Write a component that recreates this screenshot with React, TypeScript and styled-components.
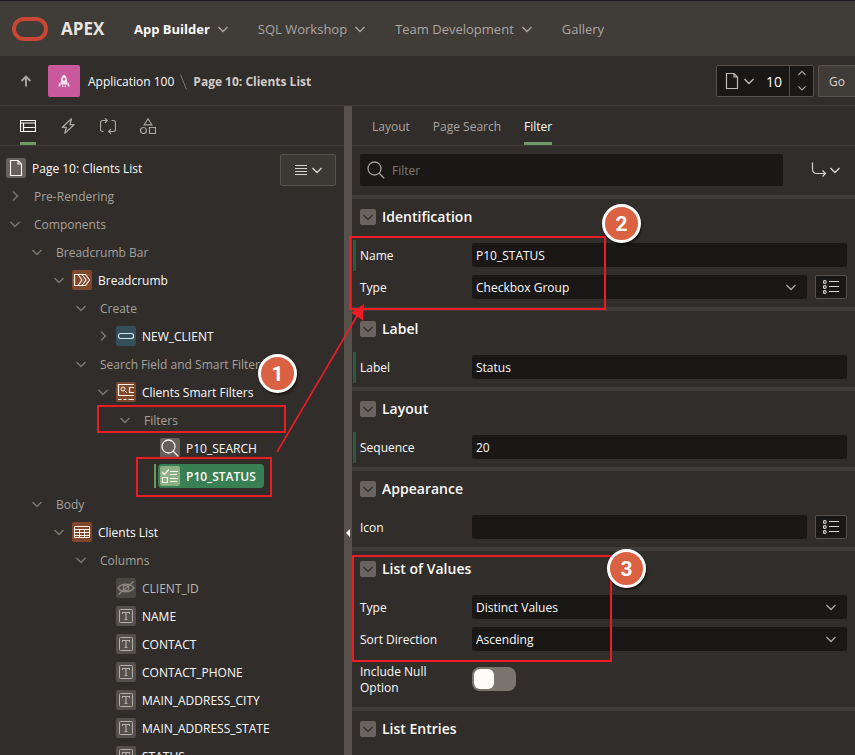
import React, { useState } from "react";
import styled, { createGlobalStyle, css } from "styled-components";

const c = {
  header: "#403c38",
  body: "#312d2a",
  field: "#1a1816",
  line: "#403c39",
  splitter: "#56514b",
  border: "#57524d",
  text: "#fcfbfa",
  muted: "#aaa6a2",
  dim: "#7d7874",
  green: "#6d9a65",
  red: "#ec1c24",
  badge: "#da6141",
};

const GlobalStyle = createGlobalStyle`
  *, *::before, *::after { box-sizing: border-box; }
  html, body { margin: 0; background: ${c.body}; }
  body, button, input, select {
    font-family: "Open Sans", "Noto Sans", sans-serif;
    font-size: 12px;
    line-height: 16px;
    color: ${c.text};
  }
  button, input, select { margin: 0; padding: 0; border: 0; background: none; outline: none; }
  svg { display: block; flex: none; }
  a { color: inherit; text-decoration: none; }
`;

/* ---------- icons ---------- */

const Chevron = ({ dir = "down", size = 10 }: { dir?: "down" | "up" | "right"; size?: number }) => {
  const d = { down: "M.5 3L5 7.500 9.500 3", up: "M.5 7.500L5 3l4.500 4.500", right: "M3 .5L7.500 5 3 9.500" }[dir];
  return (
    <svg width={size} height={size} viewBox="0 0 10 10" fill="none" stroke="currentColor" strokeWidth="1.4" aria-hidden>
      <path d={d} />
    </svg>
  );
};

const Icon = ({ size = 16, children }: { size?: number; children: React.ReactNode }) => (
  <svg width={size} height={size} viewBox={`0 0 ${size} ${size}`} fill="none" stroke="currentColor" aria-hidden>
    {children}
  </svg>
);

const OracleMark = () => (
  <svg width="36" height="24" viewBox="0 0 36 24" fill="none" aria-hidden>
    <rect x="2" y="2" width="32" height="20" rx="10" stroke="#c74634" strokeWidth="4" />
  </svg>
);

const RocketIcon = () => (
  <Icon>
    <g fill="#f6e3ee" stroke="none">
      <path d="M8 1.5C5.8 3 5 5.200 5 7.500v4h6v-4C11 5.200 10.200 3 8 1.500zM8 5a1.300 1.300 0 1 1 0 2.600A1.300 1.300 0 0 1 8 5z" fillRule="evenodd" />
      <path d="M4.300 8.500L2.700 11v3.200l1.900-1.700zM11.700 8.500l1.600 2.500v3.200l-1.900-1.700zM6 12.200h1.200v2H6zM8.800 12.200H10v2H8.800z" />
    </g>
  </Icon>
);

const UpArrowIcon = () => (
  <Icon size={12}>
    <path d="M6 11.500V2M1.500 6L6 1.500 10.500 6" strokeWidth="1.900" />
  </Icon>
);

const PageIcon = ({ size = 20 }: { size?: number }) => (
  <svg width={size} height={size} viewBox="0 0 20 20" fill="none" stroke="currentColor" aria-hidden>
    <path d="M4.500 2.500h7.500l3.500 3.500v11.500h-11zM12 2.500V6h3.500" strokeWidth="1.200" />
  </svg>
);

const LayoutTabIcon = () => (
  <Icon>
    <path d="M.5 2.500h15v11H.5zM.5 5h15M3.500 5v8.500M3.500 9.500h12" strokeWidth="1.200" />
  </Icon>
);
const BoltIcon = () => (
  <Icon>
    <path d="M11.500.8L2.300 9.300h4L4.800 15.300l9.200-8.600h-4z" strokeWidth="1.300" strokeLinejoin="round" />
  </Icon>
);
const ProcessIcon = () => (
  <Icon>
    <path d="M3.500 13.500h-1a2 2 0 0 1-2-2v-7a2 2 0 0 1 2-2H7M5 .2l2.300 2.300L5 4.800M11.500 2.500h2a2 2 0 0 1 2 2v7a2 2 0 0 1-2 2H9M11 11.200l-2.300 2.300 2.300 2.300" strokeWidth="1.200" />
  </Icon>
);
const ShapesIcon = () => (
  <Icon>
    <g strokeWidth="1.200">
      <path d="M8 .8l3.800 6H4.200zM9.500 9.500h6v6h-6z" />
      <circle cx="3.500" cy="12.500" r="3" />
    </g>
  </Icon>
);
const SearchIcon = ({ size = 18 }: { size?: number }) => (
  <svg width={size} height={size} viewBox="0 0 18 18" fill="none" stroke="currentColor" strokeWidth="1.300" aria-hidden>
    <circle cx="7.500" cy="7.500" r="6.500" />
    <path d="M12.200 12.200l5 5" />
  </svg>
);
const MenuIcon = () => (
  <Icon size={12}>
    <path d="M0 1.500h12M0 4.500h12M0 7.500h12M0 10.500h12" />
  </Icon>
);
const GoToIcon = () => (
  <Icon>
    <path d="M1.500.5V7c0 3 1.500 4.500 4.500 4.500h8.500M11.500 8.500l3 3-3 3" strokeWidth="1.200" />
  </Icon>
);
const ListIcon = () => (
  <Icon>
    <g strokeWidth="1.100">
      <circle cx="1.800" cy="3" r="1.400" />
      <circle cx="1.800" cy="8" r="1.400" />
      <circle cx="1.800" cy="13" r="1.400" />
    </g>
    <path d="M6 2.500h10M6 7.500h10M6 12.500h10" />
  </Icon>
);
const BreadcrumbIcon = () => (
  <Icon size={20}>
    <path d="M2.500 4.500h3.500l4 5.500-4 5.500H2.500zM6.500 4.500H10l4 5.500-4 5.500H6.500M10.500 4.500h3l4 5.500-4 5.500h-3" strokeWidth="1.200" />
  </Icon>
);
const ButtonIcon = () => (
  <Icon size={20}>
    <rect x="2.500" y="7.500" width="15" height="5" rx="2" strokeWidth="1.200" />
  </Icon>
);
const SmartFilterIcon = () => (
  <Icon size={20}>
    <path d="M18 2.500H2.500v11H18M2 17.500h3.500M7.500 17.500h3M12.500 17.500H18M18 5.500h-4.500v5H18" strokeWidth="1.200" />
    <circle cx="7" cy="7" r="2" />
    <path d="M8.500 8.500l2.200 2.200" />
  </Icon>
);
const CheckListIcon = () => (
  <Icon size={20}>
    <path d="M2 6l2.200 2.500L9 3.500M10 5.500h8M10 8.500h7M10 12.500h8M10 15.500h7M2.500 11.500h5v5h-5z" strokeWidth="1.200" />
  </Icon>
);
const GridIcon = () => (
  <Icon size={20}>
    <path d="M2.500 4.500h15v11h-15zM2.500 7.500h15M2.500 10.500h15M2.500 13.500h15M7.500 7v8.500M12.500 7v8.500" />
  </Icon>
);
const HiddenIcon = () => (
  <Icon size={20}>
    <path d="M2 10c3.500-5 12.500-5 16 0-3.500 5-12.500 5-16 0zM17.500 3.500l-15 13" strokeWidth="1.400" />
    <circle cx="10" cy="10" r="2.800" strokeWidth="1.300" />
  </Icon>
);
const TextIcon = () => (
  <Icon size={20}>
    <rect x="3.500" y="3.500" width="13" height="13" rx="1" />
    <path d="M6.500 8V6.500h7V8M10 6.500v7M8.500 13.500h3" strokeWidth="1.200" />
  </Icon>
);

/* ---------- shell ---------- */

const Shell = styled.div`
  position: relative;
  display: flex;
  flex-direction: column;
  height: 100vh;
  overflow: hidden;
  background: ${c.body};
  border-top: 1px solid #1d1c24;
`;

const Header = styled.header`
  flex: none;
  display: flex;
  align-items: center;
  height: 55px;
  padding: 0 12px;
  background: ${c.header};
`;

const Brand = styled.a`
  display: flex;
  align-items: center;
  gap: 13px;
  width: 122px;
  font-size: 17px;
  line-height: 24px;
  font-weight: 700;
  color: #e6e4e1;
`;

const Nav = styled.nav`
  display: flex;
  gap: 30px;
`;

const NavItem = styled.button<{ $active?: boolean }>`
  display: flex;
  align-items: center;
  gap: 8px;
  font-size: 13px;
  line-height: 20px;
  white-space: nowrap;
  color: ${(p) => (p.$active ? c.text : c.muted)};
  font-weight: ${(p) => (p.$active ? 700 : 400)};
  svg { color: ${c.muted}; }
`;

const SubHeader = styled.div`
  flex: none;
  display: flex;
  align-items: center;
  justify-content: space-between;
  height: 50px;
  padding-left: 20px;
  border-bottom: 1px solid ${c.line};
`;

const Crumbs = styled.div`
  display: flex;
  align-items: center;
  gap: 8px;
`;

const Trail = styled.div`
  display: flex;
  align-items: center;
  gap: 6px;
  padding-top: 2px;
  line-height: 20px;
  white-space: nowrap;
`;

const UpButton = styled.button`
  display: flex;
  width: 20px;
  color: ${c.muted};
`;

const AppTile = styled.span`
  display: grid;
  place-items: center;
  width: 32px;
  height: 32px;
  border-radius: 2px;
  background: #c9599c;
`;

const CurrentPage = styled.strong`
  color: #cfccc9;
  font-weight: 700;
`;

const PageTools = styled.div`
  display: flex;
  gap: 4px;
`;

const PagePicker = styled.div`
  display: flex;
  height: 32px;
  border: 1px solid ${c.border};
  border-radius: 2px;
  background: ${c.field};
`;

const PickerButton = styled.button`
  display: flex;
  align-items: center;
  gap: 2px;
  padding: 0 5px;
  color: #bfbbb7;
`;

const PageNumber = styled.input`
  width: 30px;
  padding: 2px 0 0 7px;
  font-size: 14px;
`;

const Spinner = styled.div`
  display: flex;
  flex-direction: column;
  width: 24px;
  border-left: 1px solid ${c.border};
  color: ${c.muted};
  button { flex: 1; display: grid; place-items: center; color: inherit; }
`;

const GoButton = styled.button`
  padding: 2px 10px 0;
  border: 1px solid ${c.border};
  border-right: 0;
  border-radius: 2px 0 0 2px;
  background: ${c.header};
  color: #d6d3d0;
`;

const Workspace = styled.main`
  flex: 1;
  min-height: 0;
  display: grid;
  grid-template-columns: minmax(0, 344fr) 8px minmax(0, 503fr);
`;

const Pane = styled.section`
  min-width: 0;
  min-height: 0;
  overflow: hidden;
`;

const Splitter = styled.div`
  display: flex;
  align-items: center;
  justify-content: center;
  padding-top: 205px;
  background: ${c.splitter};
`;

const TabBar = styled.div<{ $gap: number }>`
  display: flex;
  gap: ${(p) => p.$gap}px;
  height: 40px;
  padding: 0 20px;
  border-bottom: 1px solid ${c.line};
`;

const Tab = styled.button<{ $active?: boolean }>`
  display: flex;
  align-items: center;
  padding-top: 3px;
  border-bottom: 3px solid ${(p) => (p.$active ? c.green : "transparent")};
  white-space: nowrap;
  color: ${(p) => (p.$active ? c.text : c.muted)};
`;

const TextTab = styled(Tab)`
  padding-top: 5px;
`;

/* ---------- tree ---------- */

const TreeArea = styled.div`
  display: flex;
  align-items: flex-start;
  padding: 8px 8px 0 0;
`;

const Tree = styled.ul`
  flex: 1;
  min-width: 0;
  margin: 0;
  padding: 0;
  list-style: none;
`;

const TreeRow = styled.li<{ $level: number }>`
  display: flex;
  align-items: center;
  height: 28px;
  padding-left: ${(p) => 6 + p.$level * 22}px;
  white-space: nowrap;
`;

const Toggle = styled.button`
  flex: none;
  display: flex;
  justify-content: center;
  width: 18px;
  margin-right: 4px;
  color: ${c.dim};
`;

const Node = styled.span<{ $tone: "main" | "muted" | "soft"; $selected?: boolean }>`
  display: flex;
  align-items: center;
  gap: 6px;
  color: ${(p) => ({ main: c.text, muted: "#a5a19d", soft: "#b9b6b3" }[p.$tone])};
  ${(p) =>
    p.$selected &&
    css`
      position: relative;
      margin-left: -2px;
      padding: 2px 8px 2px 2px;
      border-radius: 4px;
      background: #397f54;
      font-weight: 600;
      &::before {
        content: "";
        position: absolute;
        left: -4px;
        top: 0;
        bottom: 0;
        width: 2px;
        background: ${c.green};
      }
    `}
`;

const NodeText = styled.span`
  padding-top: 2px;
`;

const NodeIcon = styled.span<{ $bg: string; $fg?: string }>`
  display: grid;
  place-items: center;
  width: 20px;
  height: 20px;
  border-radius: 2px;
  background: ${(p) => p.$bg};
  color: ${(p) => p.$fg ?? "#fbf3ec"};
`;

const NoIcon = styled.span`
  width: 0;
`;

const MenuButton = styled.button`
  flex: none;
  display: flex;
  align-items: center;
  justify-content: center;
  gap: 5px;
  width: 56px;
  height: 32px;
  border: 1px solid ${c.border};
  border-radius: 2px;
  background: #3c3834;
  color: #d6d3d0;
`;

type TreeItem = {
  label: string;
  level: number;
  open?: boolean;
  tone?: "main" | "muted" | "soft";
  icon?: React.ReactNode;
  bg?: string;
  fg?: string;
  selected?: boolean;
  root?: boolean;
};

const orange = "#81472a";
const grey = "#65605b";
const columnBg = "#55504b";
const column = (label: string): TreeItem => ({
  label, level: 4, tone: "main", icon: <TextIcon />, bg: columnBg, fg: "#b3afab",
});

const treeItems: TreeItem[] = [
  { label: "Page 10: Clients List", level: 0, tone: "main", icon: <PageIcon />, bg: grey, root: true },
  { label: "Pre-Rendering", level: 0, open: false },
  { label: "Components", level: 0, open: true },
  { label: "Breadcrumb Bar", level: 1, open: true },
  { label: "Breadcrumb", level: 2, open: true, tone: "main", icon: <BreadcrumbIcon />, bg: orange },
  { label: "Create", level: 3, open: true },
  { label: "NEW_CLIENT", level: 4, open: false, tone: "main", icon: <ButtonIcon />, bg: "#35505b", fg: "#d3e6ee" },
  { label: "Search Field and Smart Filters", level: 3, open: true },
  { label: "Clients Smart Filters", level: 4, open: true, tone: "main", icon: <SmartFilterIcon />, bg: orange },
  { label: "Filters", level: 5, open: true },
  { label: "P10_SEARCH", level: 6, tone: "main", icon: <SearchIcon />, bg: grey },
  { label: "P10_STATUS", level: 6, tone: "main", icon: <CheckListIcon />, bg: "#8bb083", selected: true },
  { label: "Body", level: 1, open: true },
  { label: "Clients List", level: 2, open: true, tone: "main", icon: <GridIcon />, bg: orange },
  { label: "Columns", level: 3, open: true },
  { label: "CLIENT_ID", level: 4, tone: "soft", icon: <HiddenIcon />, bg: "#4a4642", fg: "#8a8580" },
  column("NAME"),
  column("CONTACT"),
  column("CONTACT_PHONE"),
  column("MAIN_ADDRESS_CITY"),
  column("MAIN_ADDRESS_STATE"),
  column("STATUS"),
];

/* ---------- property editor ---------- */

const FilterBar = styled.div`
  display: flex;
  align-items: center;
  justify-content: space-between;
  gap: 16px;
  padding: 8px 15px 9px 8px;
`;

const FilterBox = styled.label`
  flex: 1;
  max-width: 423px;
  display: flex;
  align-items: center;
  gap: 7px;
  height: 32px;
  padding: 0 7px;
  border-radius: 2px;
  background: ${c.field};
  color: #a39f9b;
  input { flex: 1; min-width: 0; height: 100%; }
  input::placeholder { color: #7d7874; opacity: 1; }
`;

const GoToButton = styled.button`
  display: flex;
  align-items: center;
  gap: 3px;
  color: #d6d3d0;
`;

const Group = styled.section`
  border-top: 4px solid ${c.line};
`;

const GroupTitle = styled.h3`
  display: flex;
  align-items: center;
  gap: 6px;
  margin: 0;
  padding: 8px;
  height: 36px;
  font-size: 14px;
  line-height: 20px;
  font-weight: 600;
`;

const Collapse = styled.button`
  display: grid;
  place-items: center;
  width: 16px;
  height: 16px;
  border-radius: 2px;
  background: #69645f;
  color: #35312e;
`;

const GroupBody = styled.div`
  padding: 4px 0;
`;

const FieldRow = styled.div<{ $changed?: boolean }>`
  display: grid;
  grid-template-columns: 104px minmax(0, 1fr);
  column-gap: 8px;
  align-items: center;
  min-height: 32px;
  padding: 4px 8px;
  background: ${(p) => (p.$changed ? "linear-gradient(#2f5843, #2f5843) 1px 100% / 3px 31px no-repeat" : "none")};
`;

const SwitchRow = styled(FieldRow)`
  padding: 7px 8px;
`;

const FieldLabel = styled.label`
  padding: 2px 16px 0 0;
`;

const Controls = styled.div`
  display: flex;
  gap: 8px;
`;

const TextField = styled.input`
  flex: 1;
  min-width: 0;
  height: 24px;
  padding: 0 4px;
  border-radius: 2px;
  background: ${c.field};
`;

const SelectWrap = styled.div`
  flex: 1;
  min-width: 0;
  display: grid;
  align-items: center;
  border-radius: 2px;
  background: ${c.field};
  color: ${c.muted};
  > * { grid-area: 1 / 1; }
  svg { justify-self: end; margin-right: 11px; pointer-events: none; }
`;

const SelectField = styled.select`
  appearance: none;
  width: 100%;
  height: 24px;
  padding: 2px 28px 0 4px;
  option { background: ${c.field}; }
`;

const SquareButton = styled.button`
  flex: none;
  display: grid;
  place-items: center;
  width: 32px;
  height: 24px;
  border: 1px solid ${c.border};
  border-radius: 2px;
  background: ${c.field};
  color: #d6d3d0;
`;

const Switch = styled.input`
  appearance: none;
  width: 44px;
  height: 24px;
  padding: 2px;
  border-radius: 8px;
  background: #7a746e;
  &::before {
    content: "";
    display: block;
    width: 20px;
    height: 20px;
    border-radius: 6px;
    background: #fcfbfa;
  }
  &:checked::before { margin-left: 20px; }
`;

type Field = {
  label: string;
  value?: string;
  kind?: "text" | "select" | "switch";
  changed?: boolean;
  pick?: boolean;
};

const groups: { title: string; fields: Field[] }[] = [
  {
    title: "Identification",
    fields: [
      { label: "Name", value: "P10_STATUS", changed: true },
      { label: "Type", value: "Checkbox Group", kind: "select", pick: true },
    ],
  },
  { title: "Label", fields: [{ label: "Label", value: "Status", changed: true }] },
  { title: "Layout", fields: [{ label: "Sequence", value: "20", changed: true }] },
  { title: "Appearance", fields: [{ label: "Icon", value: "", pick: true }] },
  {
    title: "List of Values",
    fields: [
      { label: "Type", value: "Distinct Values", kind: "select" },
      { label: "Sort Direction", value: "Ascending", kind: "select" },
      { label: "Include Null Option", kind: "switch" },
    ],
  },
  { title: "List Entries", fields: [] },
];

const PropertyRow = ({ field, id }: { field: Field; id: string }) => {
  const Row = field.kind === "switch" ? SwitchRow : FieldRow;
  return (
    <Row $changed={field.changed}>
      <FieldLabel htmlFor={id}>{field.label}</FieldLabel>
      <Controls>
        {field.kind === "switch" && <Switch id={id} type="checkbox" role="switch" />}
        {field.kind === "select" && (
          <SelectWrap>
            <SelectField id={id} defaultValue={field.value}>
              <option>{field.value}</option>
            </SelectField>
            <Chevron />
          </SelectWrap>
        )}
        {!field.kind && <TextField id={id} type="text" defaultValue={field.value} />}
        {field.pick && (
          <SquareButton aria-label={`Choose ${field.label}`}>
            <ListIcon />
          </SquareButton>
        )}
      </Controls>
    </Row>
  );
};

/* ---------- callouts ---------- */

const Callouts = styled.div`
  position: absolute;
  inset: -1px 0 0 0;
  pointer-events: none;
`;

const Frame = styled.div<{ $x: number; $y: number; $w: number; $h: number }>`
  position: absolute;
  left: ${(p) => p.$x}px;
  top: ${(p) => p.$y}px;
  width: ${(p) => p.$w}px;
  height: ${(p) => p.$h}px;
  border: 2px solid ${c.red};
`;

const Badge = styled.span<{ $x: number; $y: number }>`
  position: absolute;
  left: ${(p) => p.$x}px;
  top: ${(p) => p.$y}px;
  display: grid;
  place-items: center;
  width: 39px;
  height: 39px;
  border: 3px solid #fff;
  border-radius: 50%;
  background: ${c.badge};
  box-shadow: 1px 2px 2px rgba(0, 0, 0, 0.5);
  font-family: Roboto, sans-serif;
  font-size: 21px;
  line-height: 24px;
  font-weight: 700;
  color: #fff;
`;

const ArrowLayer = styled.svg`
  position: absolute;
  left: 270px;
  top: 300px;
`;

const tabs = [
  { name: "Rendering", icon: <LayoutTabIcon /> },
  { name: "Dynamic Actions", icon: <BoltIcon /> },
  { name: "Processing", icon: <ProcessIcon /> },
  { name: "Page Shared Components", icon: <ShapesIcon /> },
];

export default function App() {
  const [leftTab, setLeftTab] = useState("Rendering");
  const [rightTab, setRightTab] = useState("Filter");

  return (
    <Shell>
      <GlobalStyle />
      <Header>
        <Brand href="#">
          <OracleMark />
          APEX
        </Brand>
        <Nav>
          <NavItem $active>App Builder<Chevron /></NavItem>
          <NavItem>SQL Workshop<Chevron /></NavItem>
          <NavItem>Team Development<Chevron /></NavItem>
          <NavItem>Gallery</NavItem>
        </Nav>
      </Header>

      <SubHeader>
        <Crumbs>
          <UpButton aria-label="Up"><UpArrowIcon /></UpButton>
          <AppTile><RocketIcon /></AppTile>
          <Trail>
            <a href="#">Application 100</a>
            <svg width="7" height="16" viewBox="0 0 7 16" stroke={c.dim} aria-hidden><path d="M.5.500l6 15" /></svg>
            <CurrentPage>Page 10: Clients List</CurrentPage>
          </Trail>
        </Crumbs>
        <PageTools>
          <PagePicker>
            <PickerButton aria-label="Page finder"><PageIcon /><Chevron /></PickerButton>
            <PageNumber type="text" defaultValue="10" aria-label="Page number" />
            <Spinner>
              <button aria-label="Next page"><Chevron dir="up" size={8} /></button>
              <button aria-label="Previous page"><Chevron size={8} /></button>
            </Spinner>
          </PagePicker>
          <GoButton>Go</GoButton>
        </PageTools>
      </SubHeader>

      <Workspace>
        <Pane>
          <TabBar $gap={24} role="tablist">
            {tabs.map((t) => (
              <Tab key={t.name} role="tab" aria-label={t.name} $active={t.name === leftTab} onClick={() => setLeftTab(t.name)}>
                {t.icon}
              </Tab>
            ))}
          </TabBar>
          <TreeArea>
            <Tree>
              {treeItems.map((item) => (
                <TreeRow key={item.label} $level={item.level}>
                  {!item.root && (
                    <Toggle aria-label={item.label}>
                      {item.open !== undefined && <Chevron dir={item.open ? "down" : "right"} />}
                    </Toggle>
                  )}
                  <Node $tone={item.tone ?? "muted"} $selected={item.selected}>
                    {item.icon ? <NodeIcon $bg={item.bg!} $fg={item.fg}>{item.icon}</NodeIcon> : <NoIcon />}
                    <NodeText>{item.label}</NodeText>
                  </Node>
                </TreeRow>
              ))}
            </Tree>
            <MenuButton aria-label="Menu"><MenuIcon /><Chevron /></MenuButton>
          </TreeArea>
        </Pane>

        <Splitter>
          <svg width="4" height="8" viewBox="0 0 4 8" aria-hidden><path d="M4 0v8L0 4z" fill="#fff" /></svg>
        </Splitter>

        <Pane>
          <TabBar $gap={23} role="tablist">
            {["Layout", "Page Search", "Filter"].map((t) => (
              <TextTab key={t} role="tab" $active={t === rightTab} onClick={() => setRightTab(t)}>{t}</TextTab>
            ))}
          </TabBar>
          <FilterBar>
            <FilterBox>
              <SearchIcon />
              <input type="text" placeholder="Filter" aria-label="Filter" />
            </FilterBox>
            <GoToButton aria-label="Go to group"><GoToIcon /><Chevron /></GoToButton>
          </FilterBar>
          {groups.map((g) => (
            <Group key={g.title}>
              <GroupTitle>
                <Collapse aria-label={`Collapse ${g.title}`}><Chevron /></Collapse>
                {g.title}
              </GroupTitle>
              <GroupBody>
                {g.fields.map((f) => (
                  <PropertyRow key={f.label} field={f} id={`${g.title}-${f.label}`.replace(/\s/g, "-")} />
                ))}
              </GroupBody>
            </Group>
          ))}
        </Pane>
      </Workspace>

      <Callouts>
        <Frame $x={97} $y={405} $w={189} $h={28} />
        <Frame $x={136} $y={457} $w={136} $h={40} />
        <Frame $x={349} $y={236} $w={257} $h={74} />
        <Frame $x={352} $y={555} $w={260} $h={107} />
        <ArrowLayer width="100" height="156" viewBox="270 300 100 156" aria-hidden>
          <path d="M277 452L357 316" stroke={c.red} strokeWidth="1.600" />
          <path d="M364 304L351 312.500 363 320.500z" fill={c.red} />
        </ArrowLayer>
        <Badge $x={258} $y={354}>1</Badge>
        <Badge $x={602} $y={204}>2</Badge>
        <Badge $x={607} $y={549}>3</Badge>
      </Callouts>
    </Shell>
  );
}
